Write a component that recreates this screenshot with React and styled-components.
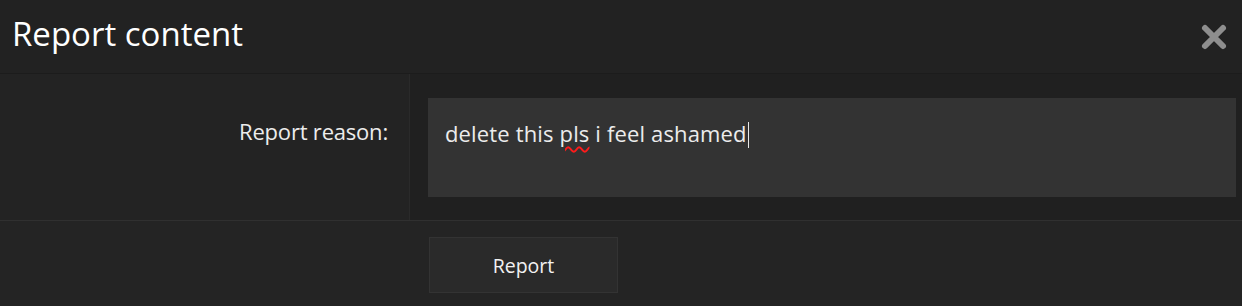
import React from "react";
import styled, { createGlobalStyle } from "styled-components";

const Global = createGlobalStyle`
  html, body { margin: 0; padding: 0; background: #242424; }
  body { font-family: "Open Sans", "Noto Sans", sans-serif; }
`;

const Dialog = styled.div`
  width: 1242px;
  height: 306px;
  background: #242424;
  display: flex;
  flex-direction: column;
  color: #f2f2f2;
`;

const Header = styled.div`
  height: 73px;
  display: flex;
  align-items: center;
  justify-content: space-between;
  padding: 0 14px 0 12px;
  background: #222222;
  border-bottom: 1px solid #1c1c1c;
`;

const Title = styled.h1`
  margin: 0;
  font-weight: 400;
  font-size: 33px;
  letter-spacing: 0;
  color: #ffffff;
  padding-bottom: 6px;
`;

const CloseButton = styled.button`
  border: 0;
  background: none;
  padding: 0;
  width: 28px;
  height: 28px;
  display: flex;
  align-items: center;
  justify-content: center;
  cursor: pointer;
`;

const Body = styled.div`
  height: 146px;
  display: grid;
  grid-template-columns: 410px 1fr;
  border-bottom: 1px solid #303030;
`;

const LabelCell = styled.div`
  background: #232323;
  border-right: 1px solid #2a2a2a;
  display: flex;
  justify-content: flex-end;
  padding: 42px 21px 0 0;
`;

const Label = styled.label`
  font-size: 22px;
  color: #ececec;
  letter-spacing: -0.2px;
`;

const FieldCell = styled.div`
  background: #202020;
  padding: 24px 6px 23px 18px;
  display: flex;
`;

const TextArea = styled.div`
  flex: 1;
  background: #333333;
  padding: 20px 17px;
  font-size: 22px;
  color: #ececec;
  letter-spacing: 0.15px;
  line-height: 30px;
`;

const Misspelled = styled.span`
  text-decoration: underline wavy #ff1a1a;
  text-decoration-thickness: 1.5px;
  text-underline-offset: 4px;
`;

const Caret = styled.span`
  display: inline-block;
  width: 1px;
  height: 26px;
  background: #e8e8e8;
  vertical-align: -6px;
  margin-left: 1px;
`;

const Footer = styled.div`
  flex: 1;
  background: #242424;
  padding: 16px 0 0 429px;
`;

const SubmitButton = styled.button`
  width: 189px;
  height: 56px;
  background: #2a2a2a;
  border: 1px solid #333333;
  color: #f2f2f2;
  font-family: "Open Sans", "Noto Sans", sans-serif;
  font-size: 19.5px;
  letter-spacing: 0;
  cursor: pointer;
`;

export default function App() {
  return (
    <>
      <Global />
      <Dialog>
        <Header>
          <Title>Report content</Title>
          <CloseButton aria-label="Close">
            <svg width="28" height="28" viewBox="0 0 28 28">
              <path
                d="M5 5 L23 23 M23 5 L5 23"
                stroke="#8e8e8e"
                strokeWidth="6"
                strokeLinecap="round"
              />
            </svg>
          </CloseButton>
        </Header>
        <Body>
          <LabelCell>
            <Label>Report reason:</Label>
          </LabelCell>
          <FieldCell>
            <TextArea>
              delete this <Misspelled>pls</Misspelled> i feel ashamed
              <Caret />
            </TextArea>
          </FieldCell>
        </Body>
        <Footer>
          <SubmitButton>Report</SubmitButton>
        </Footer>
      </Dialog>
    </>
  );
}
